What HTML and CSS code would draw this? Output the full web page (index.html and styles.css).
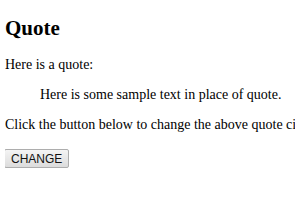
FILE: index.html
```html
<!DOCTYPE html>
<html lang="en">
<head>
    <meta charset="UTF-8">
    <title>Quote</title>
    <link rel="stylesheet" href="styles.css">
</head>
<body>
    <h1>Quote</h1>
    <p>Here is a quote:</p>
    <blockquote id="quote">Here is some sample text in place of quote.</blockquote>
    <p>Click the button below to change the above quote citation.</p>
    <button type="button" class="change">CHANGE</button>
</body>
</html>
```

FILE: styles.css
```css
html{
    overflow: hidden;
}
body{
    margin: 5px;
    font-family: "Liberation Serif", "Times New Roman", serif;
    font-size: 14px;
    color: #000;
    background: #fff;
    white-space: nowrap;
}
h1{
    font-size: 21px;
    margin: 11px 0 16px;
}
p{
    margin: 14px 0;
}
blockquote{
    margin: 14px 35px;
}
.change{
    display: block;
    font-family: "Liberation Sans", Arial, sans-serif;
    font-size: 12px;
    height: 19px;
    padding: 0 6px;
    margin: 16px 0 0 -1px;
    color: #111;
    border: 1px solid #adadad;
    border-radius: 2px;
    background: linear-gradient(#f4f4f4, #dcdcdc);
}
```
